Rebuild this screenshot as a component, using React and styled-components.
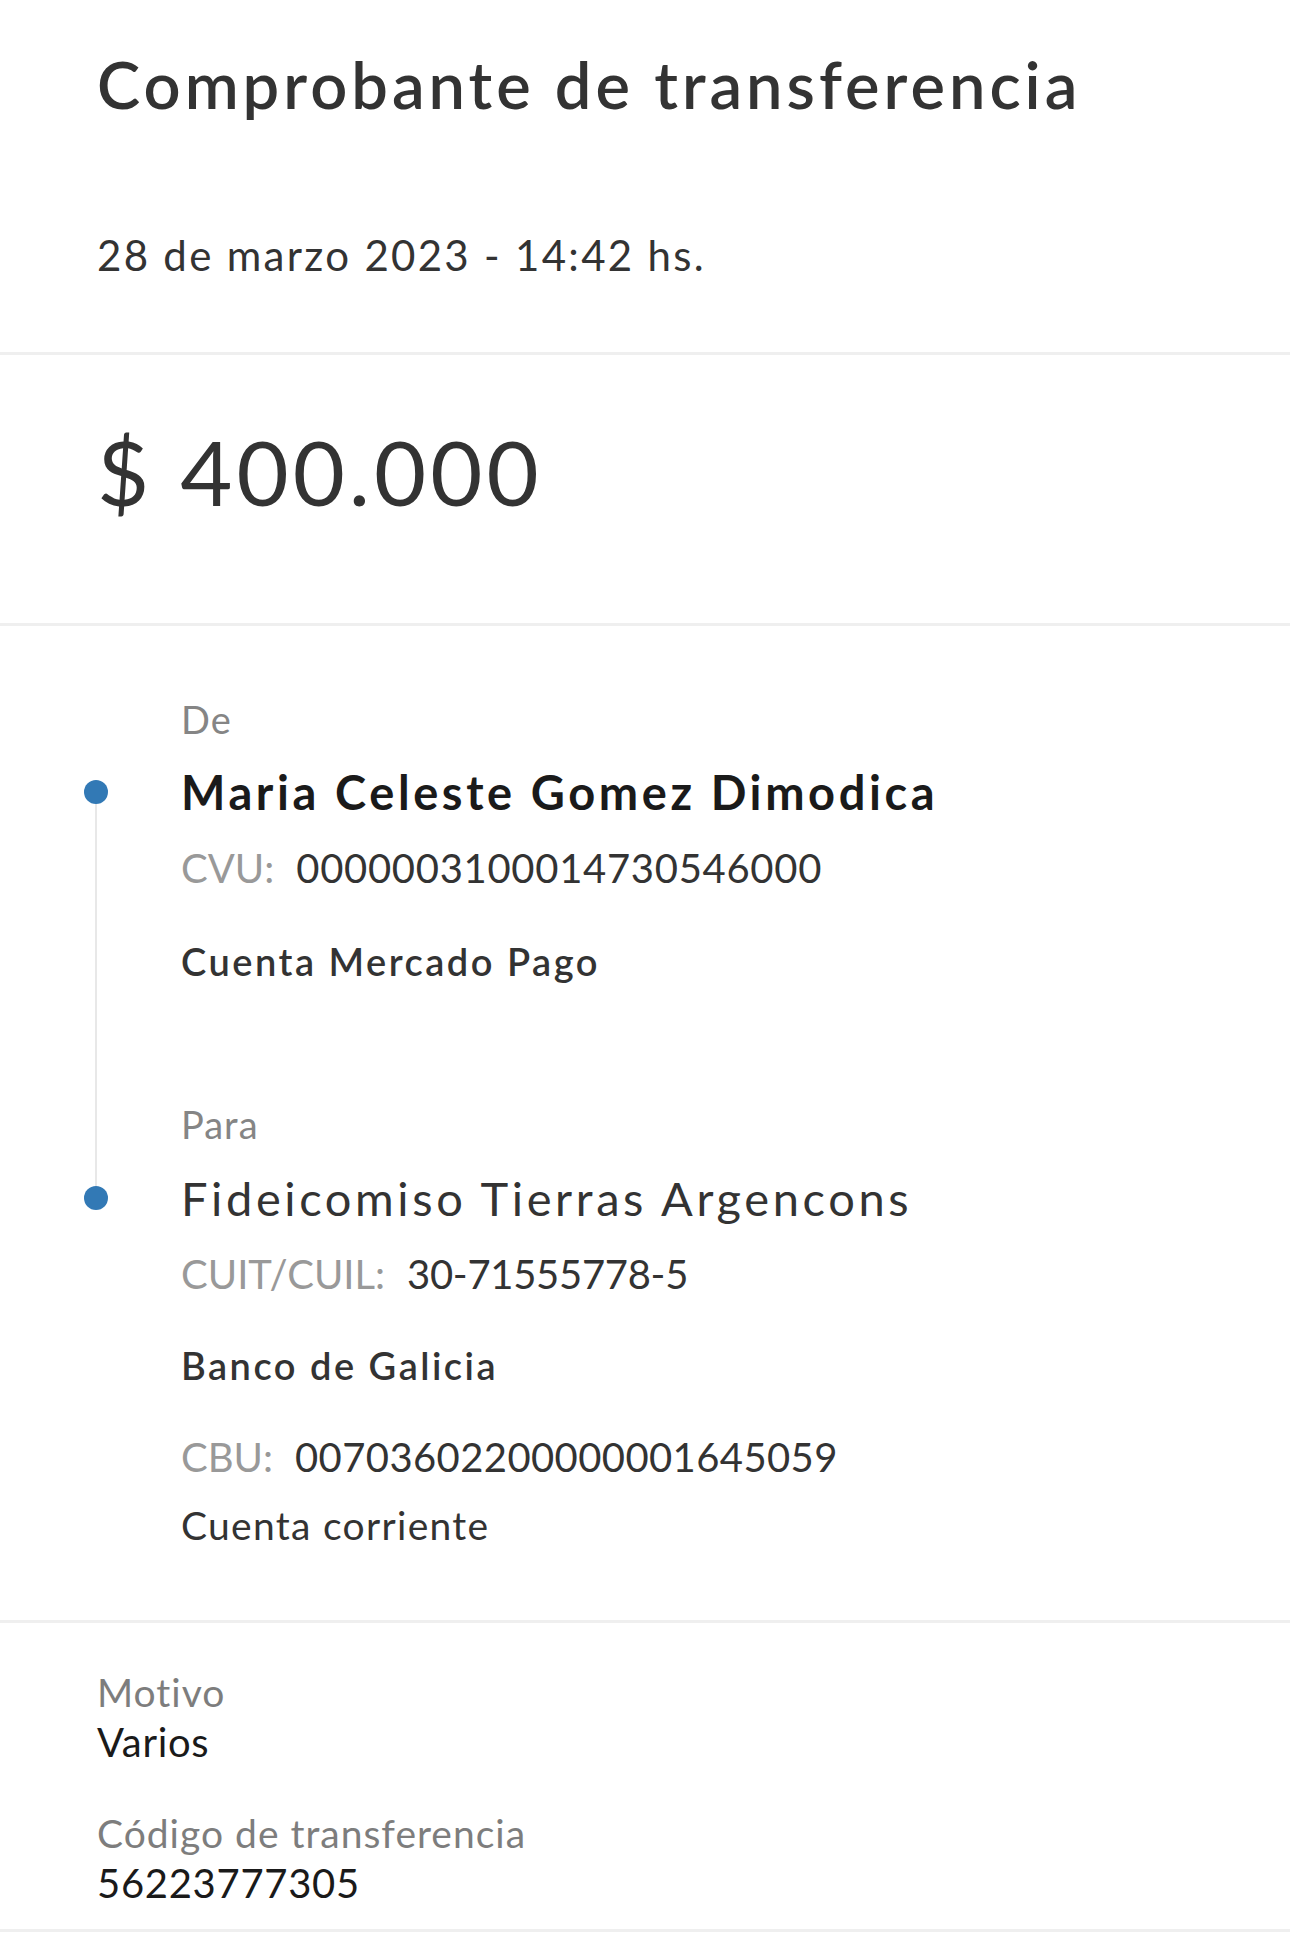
import React from "react";
import styled, { createGlobalStyle } from "styled-components";

const GlobalStyle = createGlobalStyle`
  body {
    margin: 0;
    background: #fff;
    font-family: Lato, "Open Sans", Arial, sans-serif;
    color: #333;
  }
`;

const parties = [
  {
    label: "De",
    name: "Maria Celeste Gomez Dimodica",
    strong: true,
    ids: [{ key: "CVU:", value: "0000003100014730546000" }],
    bank: "Cuenta Mercado Pago",
  },
  {
    label: "Para",
    name: "Fideicomiso Tierras Argencons",
    strong: false,
    ids: [{ key: "CUIT/CUIL:", value: "30-71555778-5" }],
    bank: "Banco de Galicia",
    account: { key: "CBU:", value: "00703602200000001645059" },
    type: "Cuenta corriente",
  },
];

export default function App() {
  const [from, to] = parties;

  return (
    <>
      <GlobalStyle />
      <Page>
        <Header>
          <Title>Comprobante de transferencia</Title>
          <DateLine>28 de marzo 2023 - 14:42 hs.</DateLine>
        </Header>
        <Divider />

        <AmountBox>
          <Amount>$ 400.000</Amount>
        </AmountBox>
        <Divider />

        <Timeline>
          <Row>
            <Rail />
            <Label>{from.label}</Label>
          </Row>
          <Row>
            <Rail dot below />
            <Name h={96} strong>{from.name}</Name>
          </Row>
          <Row>
            <Rail above below />
            <IdLine h={56} ls={0.7}>
              <IdKey>{from.ids[0].key}</IdKey>
              {from.ids[0].value}
            </IdLine>
          </Row>
          <Row>
            <Rail above below />
            <Bank h={130} space={73}>{from.bank}</Bank>
          </Row>
          <Row>
            <Rail above below />
            <Label>{to.label}</Label>
          </Row>
          <Row>
            <Rail dot above />
            <Name h={98}>{to.name}</Name>
          </Row>
          <Row>
            <Rail />
            <IdLine h={54} ls={-0.3}>
              <IdKey>{to.ids[0].key}</IdKey>
              {to.ids[0].value}
            </IdLine>
          </Row>
          <Row>
            <Rail />
            <Bank h={128}>{to.bank}</Bank>
          </Row>
          <Row>
            <Rail />
            <IdLine h={56} ls={0.4}>
              <IdKey>{to.account.key}</IdKey>
              {to.account.value}
            </IdLine>
          </Row>
          <Row>
            <Rail />
            <Plain h={80}>{to.type}</Plain>
          </Row>
        </Timeline>
        <Divider />

        <Details>
          <Field>
            <FieldLabel>Motivo</FieldLabel>
            <FieldValue>Varios</FieldValue>
          </Field>
          <Field>
            <FieldLabel>Código de transferencia</FieldLabel>
            <FieldValue>56223777305</FieldValue>
          </Field>
        </Details>
        <Divider />
      </Page>
    </>
  );
}

function Rail({ dot, above, below }) {
  return (
    <RailCol>
      <Segment on={above ? 1 : 0} />
      {dot && <Dot />}
      <Segment on={below ? 1 : 0} />
    </RailCol>
  );
}

const Page = styled.div`
  width: 1290px;
  min-height: 1940px;
  background: #fff;
`;

const Divider = styled.div`
  height: 3px;
  background: #efefef;
`;

const Header = styled.header`
  padding: 44px 0 69px 97px;
  display: flex;
  flex-direction: column;
  gap: 103px;
`;

const Title = styled.h1`
  margin: 0;
  font-size: 65px;
  line-height: 80px;
  font-weight: 600;
  letter-spacing: 4px;
  color: #333;
`;

const DateLine = styled.div`
  font-size: 42px;
  line-height: 56px;
  letter-spacing: 2.3px;
  color: #333;
`;

const AmountBox = styled.section`
  padding: 61px 0 97px 97px;
`;

const Amount = styled.div`
  font-size: 90px;
  line-height: 110px;
  font-weight: 400;
  letter-spacing: 4px;
  color: #333;
`;

const Timeline = styled.section`
  padding: 68px 0 55px 84px;
  display: flex;
  flex-direction: column;
`;

const Row = styled.div`
  display: grid;
  grid-template-columns: 24px 1fr;
  column-gap: 73px;
`;

const RailCol = styled.div`
  display: flex;
  flex-direction: column;
  align-items: center;
`;

const Segment = styled.div`
  flex: 1;
  width: 2px;
  background: ${(p) => (p.on ? "#e8e8e8" : "transparent")};
`;

const Dot = styled.div`
  width: 24px;
  height: 24px;
  border-radius: 50%;
  background: #3279b5;
  flex: none;
`;

const Label = styled.div`
  font-size: 38px;
  line-height: 50px;
  letter-spacing: 1px;
  color: #858585;
`;

const Name = styled.div`
  font-size: 47px;
  line-height: ${(p) => p.h}px;
  font-weight: ${(p) => (p.strong ? 700 : 400)};
  letter-spacing: 3.6px;
  color: ${(p) => (p.strong ? "#1a1a1a" : "#333")};
`;

const IdLine = styled.div`
  font-size: 40px;
  line-height: ${(p) => p.h}px;
  letter-spacing: ${(p) => p.ls}px;
  color: #333;
`;

const IdKey = styled.span`
  color: #999;
  margin-right: 22px;
  letter-spacing: 0;
`;

const Bank = styled.div`
  font-size: 38px;
  line-height: ${(p) => p.h}px;
  padding-bottom: ${(p) => p.space || 0}px;
  font-weight: 600;
  letter-spacing: 2.5px;
  color: #333;
`;

const Plain = styled.div`
  font-size: 39px;
  line-height: ${(p) => p.h}px;
  letter-spacing: 1.3px;
  color: #333;
`;

const Details = styled.section`
  padding: 44px 0 21px 97px;
  display: flex;
  flex-direction: column;
  gap: 41px;
`;

const Field = styled.div`
  display: flex;
  flex-direction: column;
`;

const FieldLabel = styled.div`
  font-size: 39px;
  line-height: 50px;
  letter-spacing: 1px;
  color: #7d7d7d;
`;

const FieldValue = styled.div`
  font-size: 40px;
  line-height: 50px;
  letter-spacing: 0.7px;
  color: #1a1a1a;
`;
